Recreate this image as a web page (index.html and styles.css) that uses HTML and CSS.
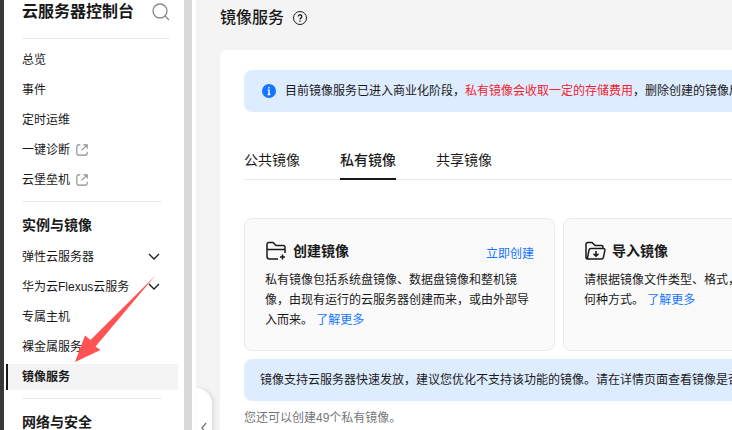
FILE: index.html
```html
<!DOCTYPE html>
<html lang="zh-CN">
<head>
<meta charset="utf-8">
<title>镜像服务</title>
<link rel="stylesheet" href="styles.css">
</head>
<body>
<div class="app">
  <aside class="sidebar">
    <header class="side-head">
      <span class="side-title">云服务器控制台</span>
      <button class="icon-btn" type="button" aria-label="搜索">
        <svg width="18" height="18" viewBox="0 0 18 18" fill="none" stroke="#8a8a8a" stroke-width="1.3"><circle cx="8" cy="8" r="7"/><path d="M13 13l4 4"/></svg>
      </button>
    </header>
    <nav class="side-nav">
      <a class="item" href="#">总览</a>
      <a class="item" href="#">事件</a>
      <a class="item" href="#">定时运维</a>
      <a class="item" href="#">一键诊断
        <svg class="ext" width="12" height="12" viewBox="0 0 14 14" fill="none" stroke="#8a8a8a" stroke-width="1.3"><path d="M5 1H3a2 2 0 0 0-2 2v8a2 2 0 0 0 2 2h8a2 2 0 0 0 2-2V9M8.500 1H13v4.500M12.500 1.500L6.500 7.500"/></svg></a>
      <a class="item" href="#">云堡垒机
        <svg class="ext" width="12" height="12" viewBox="0 0 14 14" fill="none" stroke="#8a8a8a" stroke-width="1.3"><path d="M5 1H3a2 2 0 0 0-2 2v8a2 2 0 0 0 2 2h8a2 2 0 0 0 2-2V9M8.500 1H13v4.500M12.500 1.500L6.500 7.500"/></svg></a>
      <h2 class="group">实例与镜像</h2>
      <a class="item" href="#">弹性云服务器
        <svg class="chev" width="12" height="8" viewBox="0 0 12 8" fill="none" stroke="#191919" stroke-width="1.3"><path d="M1 1l5 5 5-5"/></svg></a>
      <a class="item" href="#">华为云Flexus云服务
        <svg class="chev" width="12" height="8" viewBox="0 0 12 8" fill="none" stroke="#191919" stroke-width="1.3"><path d="M1 1l5 5 5-5"/></svg></a>
      <a class="item" href="#">专属主机</a>
      <a class="item" href="#">裸金属服务器</a>
      <a class="item active" href="#" aria-current="page">镜像服务</a>
      <h2 class="group">网络与安全</h2>
    </nav>
    <svg class="pointer" width="84" height="90" viewBox="0 0 84 90" fill="#ff5252" aria-hidden="true"><path d="M82 2L17.500 66 12 61.500 2 88 27.500 76 22.500 72.500Z"/></svg>
  </aside>
  <button class="collapse" type="button" aria-label="收起菜单">
    <svg width="8" height="12" viewBox="0 0 8 12" fill="none" stroke="#777" stroke-width="1.3"><path d="M6 1L2 6l4 5"/></svg>
  </button>
  <main class="main">
    <div class="page-head">
      <h1>镜像服务</h1>
      <button class="icon-btn" type="button" aria-label="帮助">
        <svg width="14" height="14" viewBox="0 0 14 14" fill="none" stroke="#191919"><circle cx="7" cy="7" r="6.500"/><path stroke-width="1.300" d="M5.200 5.600a1.800 1.800 0 1 1 2.600 1.600c-.6.300-.8.600-.8 1.200M7 9.400v1.300"/></svg>
      </button>
    </div>
    <section class="panel">
      <div class="notice">
        <svg width="14" height="14" viewBox="0 0 14 14"><circle cx="7" cy="7" r="7" fill="#1476ff"/><path d="M7 3v1.600M5.800 6.100H7V10.500M5.600 10.500h2.800" stroke="#fff" stroke-width="1.400" fill="none"/></svg>
        <p>目前镜像服务已进入商业化阶段，<span class="warn">私有镜像会收取一定的存储费用</span>，删除创建的镜像后将停止收费。</p>
      </div>
      <nav class="tabs">
        <a class="tab" href="#">公共镜像</a>
        <a class="tab current" href="#" aria-current="page">私有镜像</a>
        <a class="tab" href="#">共享镜像</a>
      </nav>
      <div class="cards">
        <article class="card">
          <div class="card-head">
            <svg width="22" height="20" viewBox="0 0 22 20" fill="none" stroke="#191919" stroke-width="1.500"><path d="M13 18H4.500a2.500 2.500 0 0 1-2.500-2.500V3.200A1.700 1.700 0 0 1 3.700 1.500H8l3 3h7.300A1.700 1.700 0 0 1 20 6.200V12M2 8.500h18M17.500 13.500v5M15 16h5"/></svg>
            <h3>创建镜像</h3>
            <a class="link action" href="#">立即创建</a>
          </div>
          <p>私有镜像包括系统盘镜像、数据盘镜像和整机镜像，由现有运行的云服务器创建而来，或由外部导入而来。 <a class="link" href="#">了解更多</a></p>
        </article>
        <article class="card">
          <div class="card-head">
            <svg width="22" height="20" viewBox="0 0 22 20" fill="none" stroke="#191919" stroke-width="1.500"><path d="M4 18H3.500A1.500 1.500 0 0 1 2 16.500V3.200A1.700 1.700 0 0 1 3.700 1.500H8l3 3h6.500A1.500 1.500 0 0 1 19 6v1.500M7 7.500h12.500a1.500 1.500 0 0 1 1.400 1.900l-1.600 7.200A1.800 1.800 0 0 1 17.500 18H4.500a1 1 0 0 1-1-1.200L5 9a2 2 0 0 1 2-1.500M12 10v5M9.500 12.700L12 15.200l2.500-2.500"/></svg>
            <h3>导入镜像</h3>
            <a class="link action" href="#">立即导入</a>
          </div>
          <p>请根据镜像文件类型、格式，以及系统类型，选择何种方式。 <a class="link" href="#">了解更多</a></p>
        </article>
      </div>
      <div class="notice tip">
        <p>镜像支持云服务器快速发放，建议您优化不支持该功能的镜像。请在详情页面查看镜像是否支持快速发放。</p>
      </div>
      <p class="quota">您还可以创建49个私有镜像。</p>
    </section>
  </main>
</div>
</body>
</html>
```
FILE: styles.css
```css
* { box-sizing: border-box; }
body, h1, h2, h3, p { margin: 0; }
body {
  font: 12px/20px "Liberation Sans", "Noto Sans CJK SC", sans-serif;
  color: #191919;
  background: #f4f4f4;
}
a { color: inherit; text-decoration: none; }
svg { display: block; flex: none; }
button { padding: 0; border: 0; background: none; }

.app {
  position: relative;
  display: flex;
  height: 100vh;
  overflow: hidden;
}

.sidebar {
  position: relative;
  flex: none;
  width: 192px;
  background: #fff;
  border-left: 4px solid #3a3734;
  border-right: 8px solid #d9d9d9;
}
.side-head {
  display: flex;
  align-items: center;
  justify-content: space-between;
  height: 39px;
  margin: 0 14px 0 18px;
  padding-bottom: 14px;
  border-bottom: 1px solid #ebebeb;
}
.side-title { font-size: 16px; font-weight: 700; }
.side-nav { padding-top: 6px; }
.item {
  display: flex;
  align-items: center;
  gap: 6px;
  height: 26px;
  margin: 2px 6px 4px 2px;
  padding: 0 18px 0 16px;
  white-space: nowrap;
}
.chev { margin-left: auto; }
.item.active {
  font-weight: 700;
  background: #f4f4f4;
  border-left: 2px solid #191919;
  padding-left: 14px;
}
.group {
  margin: 8px 22px 9px 18px;
  padding-top: 13px;
  border-top: 1px solid #ebebeb;
  font-size: 14px;
  font-weight: 700;
}
.pointer {
  position: absolute;
  left: 69px;
  top: 274px;
}

.collapse {
  position: absolute;
  left: 196px;
  top: 388px;
  width: 16px;
  height: 80px;
  padding-left: 4px;
  background: #fff;
  border-radius: 0 16px 16px 0;
  box-shadow: 2px 0 4px rgba(0, 0, 0, 0.1);
}

.main {
  flex: 1;
  min-width: 0;
  overflow: hidden;
  padding-left: 24px;
  border-left: 4px solid #fff;
}
.page-head {
  display: flex;
  align-items: center;
  gap: 9px;
  height: 50px;
  padding-bottom: 14px;
}
h1 { font-size: 16px; font-weight: 500; }

.panel {
  min-height: 100%;
  padding: 20px 0 0 24px;
  background: #fff;
  border-radius: 8px 0 0 0;
  white-space: nowrap;
}
.notice {
  display: flex;
  align-items: center;
  gap: 9px;
  height: 42px;
  padding-left: 18px;
  background: #deecff;
  border-radius: 8px 0 0 8px;
}
.warn { color: #f5222d; }

.tabs {
  display: flex;
  gap: 40px;
  margin-top: 38px;
  border-bottom: 1px solid #ebebeb;
  font-size: 14px;
}
.tab {
  margin-bottom: -1px;
  padding-bottom: 8px;
  border-bottom: 2px solid transparent;
}
.tab.current {
  font-weight: 500;
  border-bottom-color: #191919;
}

.cards {
  display: grid;
  grid-auto-flow: column;
  grid-auto-columns: 311px;
  gap: 8px;
  margin: 38px 0 8px;
}
.card {
  min-height: 133px;
  padding: 20px;
  background: #fafafa;
  border: 1px solid #ebebeb;
  border-radius: 8px;
  white-space: normal;
}
.card-head {
  display: flex;
  align-items: center;
  gap: 6px;
  height: 24px;
  margin-bottom: 7px;
}
h3 { font-size: 14px; font-weight: 700; }
.link { color: #1476ff; }
.action { margin-left: auto; padding-top: 6px; }
.tip { padding-left: 16px; }
.quota { margin-top: 7px; color: #777; }
```
